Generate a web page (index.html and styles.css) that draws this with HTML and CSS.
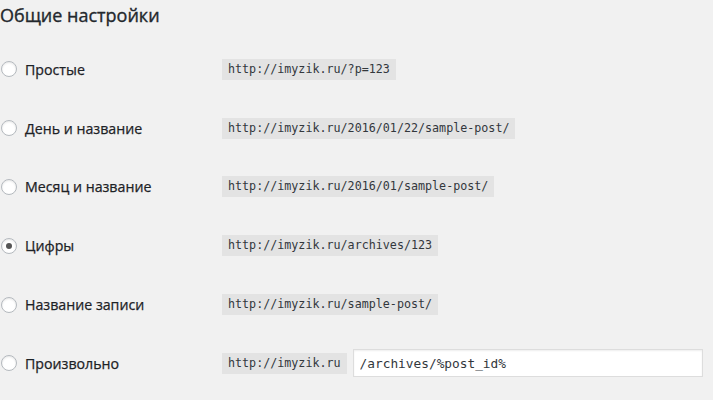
FILE: index.html
```html
<!DOCTYPE html>
<html lang="ru">
<head>
<meta charset="utf-8">
<title>Постоянные ссылки</title>
<link rel="stylesheet" href="styles.css">
</head>
<body>
<h2 class="title">Общие настройки</h2>
<div class="options">
  <div class="row">
    <label class="choice"><span class="radio"></span>Простые</label>
    <code class="url">http://imyzik.ru/?p=123</code>
  </div>
  <div class="row">
    <label class="choice"><span class="radio"></span>День и название</label>
    <code class="url">http://imyzik.ru/2016/01/22/sample-post/</code>
  </div>
  <div class="row">
    <label class="choice"><span class="radio"></span>Месяц и название</label>
    <code class="url">http://imyzik.ru/2016/01/sample-post/</code>
  </div>
  <div class="row">
    <label class="choice"><span class="radio checked"></span>Цифры</label>
    <code class="url">http://imyzik.ru/archives/123</code>
  </div>
  <div class="row">
    <label class="choice"><span class="radio"></span>Название записи</label>
    <code class="url">http://imyzik.ru/sample-post/</code>
  </div>
  <div class="row">
    <label class="choice"><span class="radio"></span>Произвольно</label>
    <div class="custom">
      <code class="url">http://imyzik.ru</code>
      <input class="structure" type="text" value="/archives/%post_id%">
    </div>
  </div>
</div>
</body>
</html>
```
FILE: styles.css
```css
html, body {
  margin: 0;
  padding: 0;
  background: #f1f1f1;
}
body {
  font-family: "Open Sans", "Noto Sans", sans-serif;
  color: #23282d;
  width: 713px;
  height: 400px;
  overflow: hidden;
}
.title {
  margin: 0;
  padding: 3px 0 0 0;
  height: 37px;
  font-size: 18px;
  font-weight: 400;
  line-height: 24px;
  color: #23282d;
  -webkit-text-stroke: 0.35px #23282d;
}
.options {
  display: flex;
  flex-direction: column;
}
.row {
  height: 58.8px;
  display: grid;
  grid-template-columns: 222px 1fr;
  align-items: center;
}
.choice {
  display: flex;
  align-items: center;
  gap: 8px;
  font-size: 14.2px;
  font-weight: 400;
  padding-left: 1px;
  color: #1d2226;
  -webkit-text-stroke: 0.25px #1d2226;
}
.radio {
  width: 16px;
  height: 16px;
  box-sizing: border-box;
  border: 1px solid #b4b9be;
  border-radius: 50%;
  background: #fff;
  box-shadow: inset 0 1px 2px rgba(0,0,0,0.1);
  display: flex;
  align-items: center;
  justify-content: center;
  -webkit-text-stroke: 0;
}
.radio.checked::before {
  content: "";
  width: 6px;
  height: 6px;
  border-radius: 50%;
  background: #555;
}
.url {
  justify-self: start;
  display: inline-block;
  font-family: "DejaVu Sans Mono", "Liberation Mono", monospace;
  font-size: 11.7px;
  line-height: 21px;
  height: 21px;
  padding: 0 6px;
  background: #e3e3e3;
  color: #32373c;
}
.custom {
  display: flex;
  align-items: center;
  gap: 6px;
}
.structure {
  box-sizing: border-box;
  width: 350px;
  height: 28px;
  margin: 0;
  padding: 0 6px;
  border: 1px solid #ddd;
  background: #fff;
  box-shadow: inset 0 1px 2px rgba(0,0,0,0.07);
  font-family: "DejaVu Sans Mono", "Liberation Mono", monospace;
  font-size: 12.8px;
  color: #32373c;
  outline: none;
}
```
